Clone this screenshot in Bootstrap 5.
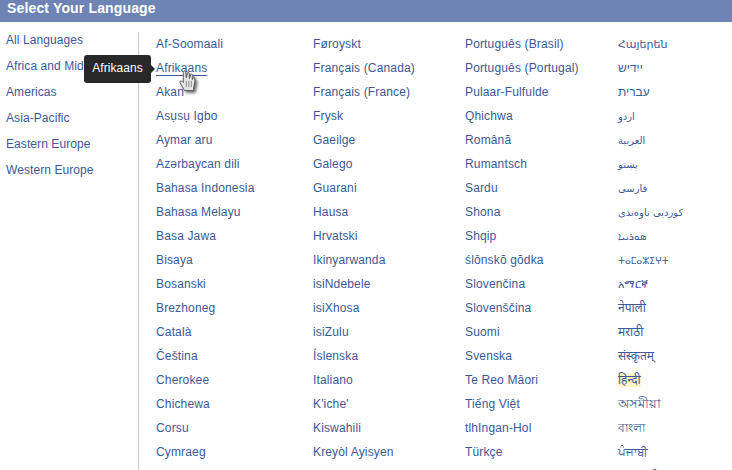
<!doctype html>
<html lang="en">
<head>
<meta charset="utf-8">
<title>Select Your Language</title>
<link href="https://cdn.jsdelivr.net/npm/bootstrap@5.3.0/dist/css/bootstrap.min.css" rel="stylesheet">
<style>
html,body{height:470px;overflow:hidden;background:#fff}
body{font-family:"Liberation Sans",Arial,"Noto Sans","DejaVu Sans","Noto Sans CJK SC",sans-serif;font-size:12px;line-height:16px;color:#3b5998;position:relative}
a{color:#3b5998;text-decoration:none}
.lang-head{background:#6d84b4;color:#fff;font-size:14px;font-weight:700;height:22px;line-height:17px;padding:0 7px;letter-spacing:.15px}
.lang-body{height:448px;overflow:hidden}
.lang-side{width:139px;height:438px;margin-top:10px;border-right:1px solid #ccc;flex:none;padding:1px 0 0 6px;letter-spacing:.08px}
.lang-side a{display:block;height:26px;line-height:14px}
.lang-cols{padding:14px 0 0 17px;letter-spacing:.15px}
.lang-col{list-style:none;margin:0;padding:0;flex:none}
.lang-col li{height:24px;line-height:16px;white-space:nowrap}
.w1{width:157px}.w2{width:152px}.w3{width:153px}.w4{width:110px;letter-spacing:0}
.lang-col.w4 a{font-family:"DejaVu Sans","Noto Sans","Liberation Sans",sans-serif;font-size:12px}
.lang-col.w4 a.s-arm{font-size:11px}
.lang-col.w4 a.s-heb{font-family:"Liberation Sans",sans-serif;font-size:12px}
.lang-col.w4 a.s-ara{font-size:10px}
.lang-col.w4 a.s-syr{font-size:10px}
.lang-col.w4 a.s-tfng{font-size:9px}
.lang-col.w4 a.s-eth{font-size:10.5px}
.lang-col.w4 a.s-beng{font-size:13px}
.hl{background:#fff2c4}
.hover-link{text-decoration:underline;text-underline-offset:3px;color:#3b5998}
.tip{position:absolute;left:84px;top:55px;height:28px;width:67px;background:#282828;color:#fff;border-radius:3px;line-height:27px;text-align:center;white-space:nowrap;letter-spacing:.05px}
.tip::after{content:"";position:absolute;right:-4px;top:10px;border-left:4px solid #282828;border-top:4px solid transparent;border-bottom:4px solid transparent}
.hand{position:absolute;left:176px;top:67px;width:24px;height:27px;filter:drop-shadow(2px 2px 1.5px rgba(0,0,0,.6))}
</style>
</head>
<body>
<div class="lang-head">Select Your Language</div>
<div class="lang-body d-flex">
  <div class="lang-side">
    <a href="#">All Languages</a>
    <a href="#">Africa and Middle East</a>
    <a href="#">Americas</a>
    <a href="#">Asia-Pacific</a>
    <a href="#">Eastern Europe</a>
    <a href="#">Western Europe</a>
  </div>
  <div class="lang-cols d-flex">
    <ul class="lang-col w1">
      <li><a href="#">Af-Soomaali</a></li>
      <li><a href="#" class="hover-link">Afrikaans</a></li>
      <li><a href="#">Akan</a></li>
      <li><a href="#">Asụsụ Igbo</a></li>
      <li><a href="#">Aymar aru</a></li>
      <li><a href="#">Azərbaycan dili</a></li>
      <li><a href="#">Bahasa Indonesia</a></li>
      <li><a href="#">Bahasa Melayu</a></li>
      <li><a href="#">Basa Jawa</a></li>
      <li><a href="#">Bisaya</a></li>
      <li><a href="#">Bosanski</a></li>
      <li><a href="#">Brezhoneg</a></li>
      <li><a href="#">Català</a></li>
      <li><a href="#">Čeština</a></li>
      <li><a href="#">Cherokee</a></li>
      <li><a href="#">Chichewa</a></li>
      <li><a href="#">Corsu</a></li>
      <li><a href="#">Cymraeg</a></li>
    </ul>
    <ul class="lang-col w2">
      <li><a href="#">Føroyskt</a></li>
      <li><a href="#">Français (Canada)</a></li>
      <li><a href="#">Français (France)</a></li>
      <li><a href="#">Frysk</a></li>
      <li><a href="#">Gaeilge</a></li>
      <li><a href="#">Galego</a></li>
      <li><a href="#">Guarani</a></li>
      <li><a href="#">Hausa</a></li>
      <li><a href="#">Hrvatski</a></li>
      <li><a href="#">Ikinyarwanda</a></li>
      <li><a href="#">isiNdebele</a></li>
      <li><a href="#">isiXhosa</a></li>
      <li><a href="#">isiZulu</a></li>
      <li><a href="#">Íslenska</a></li>
      <li><a href="#">Italiano</a></li>
      <li><a href="#">K'iche'</a></li>
      <li><a href="#">Kiswahili</a></li>
      <li><a href="#">Kreyòl Ayisyen</a></li>
    </ul>
    <ul class="lang-col w3">
      <li><a href="#">Português (Brasil)</a></li>
      <li><a href="#">Português (Portugal)</a></li>
      <li><a href="#">Pulaar-Fulfulde</a></li>
      <li><a href="#">Qhichwa</a></li>
      <li><a href="#">Română</a></li>
      <li><a href="#">Rumantsch</a></li>
      <li><a href="#">Sardu</a></li>
      <li><a href="#">Shona</a></li>
      <li><a href="#">Shqip</a></li>
      <li><a href="#">ślōnskŏ gŏdka</a></li>
      <li><a href="#">Slovenčina</a></li>
      <li><a href="#">Slovenščina</a></li>
      <li><a href="#">Suomi</a></li>
      <li><a href="#">Svenska</a></li>
      <li><a href="#">Te Reo Māori</a></li>
      <li><a href="#">Tiếng Việt</a></li>
      <li><a href="#">tlhIngan-Hol</a></li>
      <li><a href="#">Türkçe</a></li>
    </ul>
    <ul class="lang-col w4">
      <li><a href="#" class="s-arm">Հայերեն</a></li>
      <li><a href="#" class="s-heb">ייִדיש</a></li>
      <li><a href="#" class="s-heb">עברית</a></li>
      <li><a href="#" class="s-ara">اردو</a></li>
      <li><a href="#" class="s-ara">العربية</a></li>
      <li><a href="#" class="s-ara">پښتو</a></li>
      <li><a href="#" class="s-ara">فارسی</a></li>
      <li><a href="#" class="s-ara">کوردیی ناوەندی</a></li>
      <li><a href="#" class="s-syr">ܣܘܪܝܝܐ</a></li>
      <li><a href="#" class="s-tfng">ⵜⴰⵎⴰⵣⵉⵖⵜ</a></li>
      <li><a href="#" class="s-eth">አማርኛ</a></li>
      <li><a href="#">नेपाली</a></li>
      <li><a href="#">मराठी</a></li>
      <li><a href="#">संस्कृतम्</a></li>
      <li><a href="#" class="hl">हिन्दी</a></li>
      <li><a href="#" class="s-beng">অসমীয়া</a></li>
      <li><a href="#">বাংলা</a></li>
      <li><a href="#">ਪੰਜਾਬੀ</a></li>
      <li><a href="#">ગુજરાતી</a></li>
    </ul>
  </div>
</div>
<div class="tip">Afrikaans</div>
<svg class="hand" viewBox="0 0 24 27" aria-hidden="true">
  <path d="M8.500 23.500 L4 15.500 C3.300 13.500 6 13.500 7.300 15.500 L7.300 5.500 C7.300 3.500 9.800 3.500 9.800 5.500 L10.300 11 L11.300 6 C11.800 5 13.300 5 13.300 7 L13.300 11.500 L14.800 7.500 C15.300 6.500 16.800 7.500 16.300 9.500 L16.300 12.500 L17.800 10.500 C19.300 10.500 18.800 12.500 18.800 14.500 L17.300 23.500 Z" fill="#e4e4e4" stroke="#555" stroke-width=".9"/>
  <path d="M10.300 14V20M12.800 14V20M15.300 14V20" stroke="#777" stroke-width=".8" fill="none"/>
</svg>
<script src="https://cdn.jsdelivr.net/npm/bootstrap@5.3.0/dist/js/bootstrap.bundle.min.js"></script>
</body>
</html>
